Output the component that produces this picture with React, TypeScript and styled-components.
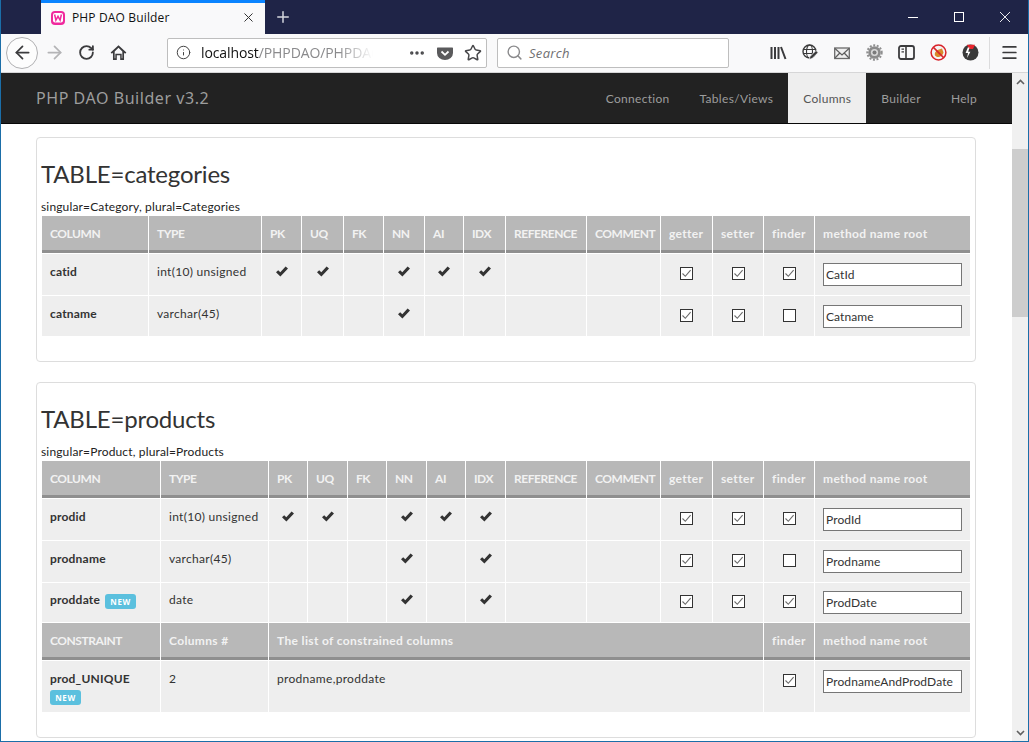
import React from "react";
import styled, { createGlobalStyle } from "styled-components";
import { ArrowLeft, ArrowRight, RotateCw, Info, Star, Search, Menu, X, Plus, Ellipsis } from "lucide-react";

const Global = createGlobalStyle`
  html, body { margin: 0; padding: 0; overflow: hidden; background: #fff; }
  * { box-sizing: border-box; }
`;

const FONT = `"Lato", "Noto Sans", sans-serif`;
const UIFONT = `"Open Sans", "Noto Sans", sans-serif`;

const Frame = styled.div`
  width: 1029px; height: 742px; display: flex; flex-direction: column;
  border: 1px solid #1b6ea8; border-top: 0; overflow: hidden; font-family: ${FONT}; color: #333;
`;
const TitleBar = styled.div`
  height: 34px; flex: none; background: #1f2447; display: flex; align-items: stretch; padding-left: 40px; color: #fff;
`;
const Tab = styled.div`
  width: 224px; background: #f9f9fa; border-top: 3px solid #0a84ff; display: flex; align-items: center;
  padding: 0 9px 2px 9px; font: 12px ${UIFONT}; color: #111; letter-spacing: .15px;
`;
const TabTitle = styled.span` flex: 1; margin-left: 6px; `;
const NewTab = styled.div` width: 35px; display: flex; align-items: center; justify-content: center; color: #d5d6de; `;
const Spring = styled.div` flex: 1; `;
const WinBtn = styled.div` width: 46px; display: flex; align-items: center; justify-content: center; color: #fff; `;

const Toolbar = styled.div`
  height: 39px; flex: none; background: #f9f9fa; border-bottom: 1px solid #d6d6d7; display: flex; align-items: center; padding-left: 5px; padding-bottom: 1px;
`;
const Slot = styled.div<{ $color?: string }>`
  width: 32px; height: 32px; flex: none; display: flex; align-items: center; justify-content: center; color: ${p => p.$color || "#3b3b3d"};
`;
const BackCircle = styled(Slot)`
  width: 32px; border-radius: 50%; border: 1px solid #b1b1b3; background: #fdfdfd;
`;
const Field = styled.div<{ $w: number; $ml: number }>`
  width: ${p => p.$w}px; margin-left: ${p => p.$ml}px; height: 30px; background: #fff; border: 1px solid #bebebe; border-radius: 2px;
  display: flex; align-items: center; flex: none; font: 14px ${UIFONT};
`;
const UrlText = styled.div`
  margin-left: 10px; width: 172px; overflow: hidden; white-space: nowrap; color: #111; font-size: 14px; letter-spacing: -.1px;
  mask-image: linear-gradient(to right, #000 80%, transparent 100%);
  -webkit-mask-image: linear-gradient(to right, #000 80%, transparent 100%);
`;
const UrlGray = styled.span` color: #8a8a8c; `;
const UrlIcons = styled.div` flex: 1; display: flex; justify-content: flex-end; align-items: center; gap: 11px; padding-right: 4px; color: #47474a; `;
const SearchText = styled.span` font-style: italic; color: #6f6f72; font-size: 13px; margin: 1px 0 0 6px; letter-spacing: .3px; `;
const RightIcons = styled.div` margin-left: 33px; display: flex; align-items: center; `;
const Sep = styled.div` width: 1px; height: 32px; background: #dcdcdd; margin-left: 3px; `;
const MenuSlot = styled(Slot)` margin-left: 3px; `;

const Viewport = styled.div` flex: 1; min-height: 0; display: flex; `;
const Page = styled.div` width: 1011px; flex: none; overflow: hidden; background: #fff; `;
const Navbar = styled.div`
  height: 51px; background: #222; border-bottom: 1px solid #080808; display: flex; align-items: stretch; padding: 0 20px 0 35px;
`;
const Brand = styled.div` flex: 1; color: #9d9d9d; font: 16px/50px "Noto Sans", sans-serif; letter-spacing: .55px; `;
const NavItem = styled.div<{ $active?: boolean }>`
  padding: 1px 15px 0; line-height: 50px; font-size: 12px; letter-spacing: .3px;
  color: ${p => (p.$active ? "#555" : "#9d9d9d")}; background: ${p => (p.$active ? "#eee" : "transparent")};
`;
const Content = styled.div` padding: 13px 35px 0; `;
const Card = styled.section`
  width: 940px; border: 1px solid #ddd; border-radius: 4px; padding: 23px 4px 25px; margin-bottom: 20px;
`;
const Title = styled.h3` margin: 0; font-size: 24px; font-weight: 400; line-height: 26px; letter-spacing: -.2px; color: #333; `;
const Sub = styled.div` margin-top: 11px; font-size: 12px; line-height: 18px; color: #222; letter-spacing: .15px; `;
const Grid = styled.table`
  margin: 0 1px; width: 928px; table-layout: fixed; border-collapse: separate; border-spacing: 0; font-size: 12px;
`;
const HeadCell = styled.th<{ $caps?: boolean }>`
  height: 38px; padding: 0 0 3px 8px; color: #f2f2f2; font-weight: 700; font-size: 12px; text-align: left; white-space: nowrap;
  letter-spacing: ${p => (p.$caps ? "-.45px" : ".35px")};
  border-right: 1px solid #fff; border-bottom: 1px solid #fff;
  background: #b8b8b8 linear-gradient(#8f8f8f, #8f8f8f) no-repeat bottom / 100% 3px;
  background-clip: padding-box;
  &:last-child { border-right: 0; }
`;
const Row = styled.tr<{ $h: number; $pt?: number }>`
  & > td { height: ${p => p.$h}px; padding-top: ${p => p.$pt ?? 9}px; }
`;
const Cell = styled.td<{ $center?: boolean }>`
  background: #eee; padding: 9px 8px 0; vertical-align: top; border-right: 1px solid #fff; border-bottom: 1px solid #fff; line-height: 17px; color: #333;
  text-align: ${p => (p.$center ? "center" : "left")}; letter-spacing: .3px; white-space: nowrap;
  &:last-child { border-right: 0; }
`;
const NameCell = styled(Cell)` font-weight: 700; letter-spacing: .2px; `;
const LastRow = styled(Row)` & > td { border-bottom: 0; } `;
const NewLabel = styled.span<{ $block?: boolean }>`
  display: ${p => (p.$block ? "block" : "inline-block")}; width: 31px; height: 15px; line-height: 15px; text-align: center;
  background: #5bc0de; color: #fff; font: 700 8px/15px "Noto Sans", sans-serif; border-radius: 3px; letter-spacing: .6px;
  margin: ${p => (p.$block ? "3px 0 0" : "0 0 0 5px")}; vertical-align: -1px;
`;
const Box = styled.span`
  display: inline-flex; width: 13px; height: 13px; border: 1px solid #333; background: #fff; align-items: center; justify-content: center; vertical-align: top; margin-top: 4px;
`;
const MethodInput = styled.input`
  display: block; width: 139px; height: 23px; border: 1px solid #767676; background: #fff; padding: 0 2px; font: 12px ${FONT}; letter-spacing: .1px; color: #333; outline: 0; border-radius: 0;
`;
const Scrollbar = styled.div` flex: 1; background: #f0f0f0; display: flex; flex-direction: column; align-items: stretch; `;
const ScrollArrow = styled.div<{ $h: number }>` height: ${p => p.$h}px; color: #606060; display: flex; align-items: center; justify-content: center; flex: none; `;
const Thumb = styled.div` height: 168px; background: #cdcdcd; flex: none; margin-top: 59px; `;

const Check = () => (
  <svg width="14" height="13" viewBox="0 0 14 13" style={{ verticalAlign: "top", marginTop: 2 }}>
    <path d="M1 7.2 L3.2 5.2 L5.3 7.2 L10.6 1.6 L13 3.6 L5.4 11.5 Z" fill="#333" />
  </svg>
);
const CheckBox = ({ on }: { on: boolean }) => (
  <Box>
    {on && (
      <svg width="11" height="11" viewBox="0 0 11 11">
        <path d="M1.5 5.5 L4.3 8.3 L9.6 2.2" stroke="#6a6a6a" strokeWidth="1.1" fill="none" />
      </svg>
    )}
  </Box>
);

const Wamp = () => (
  <svg width="16" height="16" viewBox="0 0 16 16">
    <rect x="1" y="1" width="14" height="14" rx="4" fill="#f0299d" />
    <rect x="3" y="3" width="10" height="9.5" rx="2" fill="#fff" />
    <path d="M4.6 4.5 L5.9 10.2 L8 6.4 L10.1 10.2 L11.4 4.5" stroke="#f0299d" strokeWidth="1.5" fill="none" />
  </svg>
);
const HomeIcon = () => (
  <svg width="17" height="17" viewBox="0 0 16 16">
    <path d="M8 1.2 L15.4 8 L14.2 9.2 L13.2 8.3 V15 H9.6 V10.6 H6.4 V15 H2.8 V8.3 L1.8 9.2 L.6 8 Z M4.4 7 V13.5 H5 V9.2 H11 V13.5 H11.6 V7 L8 3.6 Z" fill="#3b3b3d" fillRule="evenodd" />
  </svg>
);
const Pocket = () => (
  <svg width="16" height="16" viewBox="0 0 16 16">
    <path d="M1 2.5 H15 A.8.8 0 0 1 16 3.3 V8 A8 7 0 0 1 0 8 V3.3 A.8.8 0 0 1 1 2.5 Z" fill="#5a5a5c" />
    <path d="M4.5 6.5 L8 9.8 L11.5 6.5" stroke="#fff" strokeWidth="1.8" fill="none" />
  </svg>
);
const Library = () => (
  <svg width="17" height="16" viewBox="0 0 17 16">
    <path d="M1.5 2 V14 M5 2 V14 M8.5 2 V14 M11 2 L15.5 14" stroke="#3b3b3d" strokeWidth="2" fill="none" />
  </svg>
);
const GlobePen = () => (
  <svg width="17" height="17" viewBox="0 0 17 17">
    <circle cx="7.5" cy="7.5" r="6.5" stroke="#3a3a3a" strokeWidth="1.4" fill="none" />
    <ellipse cx="7.5" cy="7.5" rx="3" ry="6.5" stroke="#3a3a3a" strokeWidth="1.1" fill="none" />
    <path d="M1 5.5 H14 M1 9.5 H14" stroke="#3a3a3a" strokeWidth="1.1" />
    <path d="M7 15.5 L8 12.5 L14 6.5 L16.2 8.6 L10 14.6 Z" fill="#3a3a3a" stroke="#f9f9fa" strokeWidth=".8" />
  </svg>
);
const Mail = () => (
  <svg width="16" height="14" viewBox="0 0 16 14">
    <rect x=".7" y="2" width="14.6" height="10.5" fill="#efefef" stroke="#6a6a6a" strokeWidth="1.3" />
    <path d="M1 2.5 L8 9 L15 2.5 M1 12 L5.8 7 M15 12 L10.2 7" stroke="#5d5d5d" strokeWidth="1.2" fill="none" />
  </svg>
);
const Gear = () => (
  <svg width="17" height="17" viewBox="0 0 17 17">
    <circle cx="8.5" cy="8.5" r="6.3" fill="#8b8b8b" />
    <circle cx="8.5" cy="8.5" r="7.2" fill="none" stroke="#8f8f8f" strokeWidth="2" strokeDasharray="2 1.6" />
    <circle cx="8.5" cy="8.5" r="3.6" fill="#d8d8d8" />
    <circle cx="8.5" cy="8.5" r="2" fill="#7a7a7a" />
  </svg>
);
const Sidebar = () => (
  <svg width="17" height="15" viewBox="0 0 17 15">
    <rect x="1" y="1" width="15" height="13" rx="2" fill="none" stroke="#3b3b3d" strokeWidth="1.8" />
    <path d="M8 1 V14" stroke="#3b3b3d" strokeWidth="1.6" />
    <path d="M3.5 4.2 H6 M3.5 6.8 H6" stroke="#3b3b3d" strokeWidth="1.2" />
  </svg>
);
const NoBadge = () => (
  <svg width="17" height="17" viewBox="0 0 17 17">
    <circle cx="8.5" cy="8.5" r="7.4" fill="#f4f4f4" stroke="#d8232a" strokeWidth="1.5" />
    <path d="M5 11.5 C4 8 7 6 9 5.5 L12 4.5 L13.5 8.5 C13 11 10 13.5 7 13 Z" fill="#d98a2b" />
    <path d="M3.4 3.4 L13.6 13.6" stroke="#d8232a" strokeWidth="1.5" />
  </svg>
);
const DarkBadge = () => (
  <svg width="17" height="17" viewBox="0 0 17 17">
    <circle cx="8.5" cy="8.5" r="8" fill="#3a3a3a" />
    <path d="M5 .8 H13 L11 5 H7 Z" fill="#e8242c" />
    <path d="M5.8 3.5 L3.6 9 H6 L5 14 L8.4 7.8 H6.2 L7.5 3.5 Z" fill="#fff" />
  </svg>
);
const WinMin = () => (
  <svg width="12" height="12" viewBox="0 0 12 12"><path d="M1 6.5 H11" stroke="#fff" strokeWidth="1" /></svg>
);
const WinMax = () => (
  <svg width="12" height="12" viewBox="0 0 12 12"><rect x="1.5" y="1.5" width="9" height="9" fill="none" stroke="#fff" strokeWidth="1" /></svg>
);
const WinClose = () => (
  <svg width="12" height="12" viewBox="0 0 12 12"><path d="M1 1 L11 11 M11 1 L1 11" stroke="#fff" strokeWidth=".9" /></svg>
);

const HEAD = ["PK", "UQ", "FK", "NN", "AI", "IDX", "REFERENCE", "COMMENT"];
type R = { name: string; isNew?: boolean; type: string; flags: number[]; g: boolean; s: boolean; f: boolean; m: string; h: number; pt?: number };

const Cols = ({ w }: { w: number[] }) => (
  <colgroup>
    {w.map((x, i) => (
      <col key={i} style={{ width: x }} />
    ))}
  </colgroup>
);
const MainHead = () => (
  <tr>
    <HeadCell $caps>COLUMN</HeadCell>
    <HeadCell $caps>TYPE</HeadCell>
    {HEAD.map(h => (
      <HeadCell $caps key={h}>{h}</HeadCell>
    ))}
    <HeadCell>getter</HeadCell>
    <HeadCell>setter</HeadCell>
    <HeadCell>finder</HeadCell>
    <HeadCell>method name root</HeadCell>
  </tr>
);
const DataRow = ({ r, last }: { r: R; last?: boolean }) => {
  const T = last ? LastRow : Row;
  return (
    <T $h={r.h} $pt={r.pt}>
      <NameCell>
        {r.name}
        {r.isNew && <NewLabel>NEW</NewLabel>}
      </NameCell>
      <Cell>{r.type}</Cell>
      {[0, 1, 2, 3, 4, 5].map(i => (
        <Cell key={i} $center>
          {r.flags.includes(i) && <Check />}
        </Cell>
      ))}
      <Cell />
      <Cell />
      <Cell $center><CheckBox on={r.g} /></Cell>
      <Cell $center><CheckBox on={r.s} /></Cell>
      <Cell $center><CheckBox on={r.f} /></Cell>
      <Cell><MethodInput readOnly value={r.m} /></Cell>
    </T>
  );
};

const W1 = [107, 113, 40, 42, 40, 41, 39, 42, 81, 74, 52, 51, 51, 155];
const W2 = [119, 108, 39, 40, 39, 40, 39, 40, 81, 74, 52, 51, 51, 155];

export default function App() {
  return (
    <Frame>
      <Global />
      <TitleBar>
        <Tab>
          <Wamp />
          <TabTitle>PHP DAO Builder</TabTitle>
          <X size={15} strokeWidth={1.6} color="#333" />
        </Tab>
        <NewTab><Plus size={18} strokeWidth={2} /></NewTab>
        <Spring />
        <WinBtn><WinMin /></WinBtn>
        <WinBtn><WinMax /></WinBtn>
        <WinBtn><WinClose /></WinBtn>
      </TitleBar>
      <Toolbar>
        <BackCircle><ArrowLeft size={21} strokeWidth={2} /></BackCircle>
        <Slot $color="#b4b4b6"><ArrowRight size={21} strokeWidth={2} /></Slot>
        <Slot><RotateCw size={17} strokeWidth={2.6} /></Slot>
        <Slot><HomeIcon /></Slot>
        <Field $w={320} $ml={33}>
          <Info size={15} strokeWidth={1.6} color="#444" style={{ marginLeft: 8 }} />
          <UrlText>localhost<UrlGray>/PHPDAO/PHPDAO/index.php</UrlGray></UrlText>
          <UrlIcons>
            <Ellipsis size={18} strokeWidth={2.6} />
            <Pocket />
            <Star size={18} strokeWidth={2} />
          </UrlIcons>
        </Field>
        <Field $w={232} $ml={10}>
          <Search size={17} strokeWidth={2} color="#8a8a8c" style={{ marginLeft: 8 }} />
          <SearchText>Search</SearchText>
        </Field>
        <RightIcons>
          <Slot><Library /></Slot>
          <Slot><GlobePen /></Slot>
          <Slot><Mail /></Slot>
          <Slot><Gear /></Slot>
          <Slot><Sidebar /></Slot>
          <Slot><NoBadge /></Slot>
          <Slot><DarkBadge /></Slot>
          <Sep />
          <MenuSlot><Menu size={19} strokeWidth={2.2} /></MenuSlot>
        </RightIcons>
      </Toolbar>
      <Viewport>
        <Page>
          <Navbar>
            <Brand>PHP DAO Builder v3.2</Brand>
            <NavItem>Connection</NavItem>
            <NavItem>Tables/Views</NavItem>
            <NavItem $active>Columns</NavItem>
            <NavItem>Builder</NavItem>
            <NavItem>Help</NavItem>
          </Navbar>
          <Content>
            <Card>
              <Title>TABLE=categories</Title>
              <Sub>singular=Category, plural=Categories</Sub>
              <Grid>
                <Cols w={W1} />
                <thead><MainHead /></thead>
                <tbody>
                  <DataRow r={{ name: "catid", type: "int(10) unsigned", flags: [0, 1, 3, 4, 5], g: true, s: true, f: true, m: "CatId", h: 42 }} />
                  <DataRow last r={{ name: "catname", type: "varchar(45)", flags: [3], g: true, s: true, f: false, m: "Catname", h: 40 }} />
                </tbody>
              </Grid>
            </Card>
            <Card>
              <Title>TABLE=products</Title>
              <Sub>singular=Product, plural=Products</Sub>
              <Grid>
                <Cols w={W2} />
                <thead><MainHead /></thead>
                <tbody>
                  <DataRow r={{ name: "prodid", type: "int(10) unsigned", flags: [0, 1, 3, 4, 5], g: true, s: true, f: true, m: "ProdId", h: 42 }} />
                  <DataRow r={{ name: "prodname", type: "varchar(45)", flags: [3, 5], g: true, s: true, f: false, m: "Prodname", h: 42 }} />
                  <DataRow r={{ name: "proddate", isNew: true, type: "date", flags: [3, 5], g: true, s: true, f: true, m: "ProdDate", h: 40, pt: 8 }} />
                  <tr>
                    <HeadCell $caps>CONSTRAINT</HeadCell>
                    <HeadCell>Columns #</HeadCell>
                    <HeadCell colSpan={10}>The list of constrained columns</HeadCell>
                    <HeadCell>finder</HeadCell>
                    <HeadCell>method name root</HeadCell>
                  </tr>
                  <LastRow $h={51}>
                    <NameCell>prod_UNIQUE<NewLabel $block>NEW</NewLabel></NameCell>
                    <Cell>2</Cell>
                    <Cell colSpan={10}>prodname,proddate</Cell>
                    <Cell $center><CheckBox on /></Cell>
                    <Cell><MethodInput readOnly value="ProdnameAndProdDate" /></Cell>
                  </LastRow>
                </tbody>
              </Grid>
            </Card>
          </Content>
        </Page>
        <Scrollbar>
          <ScrollArrow $h={17}>
            <svg width="9" height="6" viewBox="0 0 9 6"><path d="M1 5 L4.5 1.5 L8 5" stroke="#606060" strokeWidth="1.6" fill="none" /></svg>
          </ScrollArrow>
          <Thumb />
          <Spring />
          <ScrollArrow $h={17}>
            <svg width="9" height="6" viewBox="0 0 9 6"><path d="M1 1 L4.5 4.5 L8 1" stroke="#606060" strokeWidth="1.6" fill="none" /></svg>
          </ScrollArrow>
        </Scrollbar>
      </Viewport>
    </Frame>
  );
}
